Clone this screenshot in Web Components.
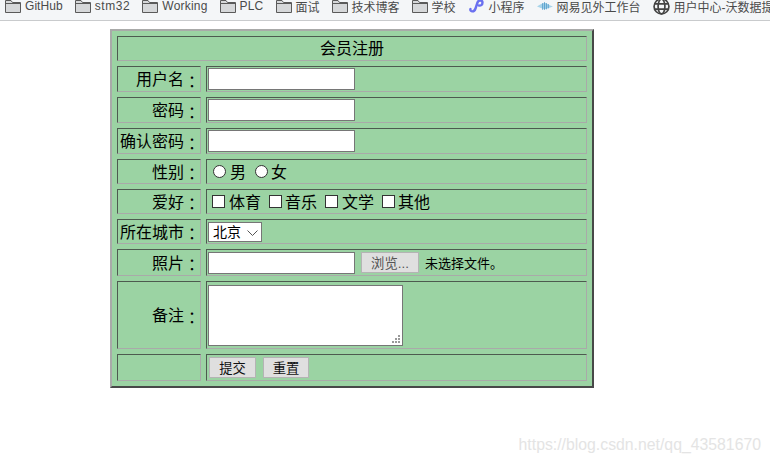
<!DOCTYPE html>
<html lang="zh">
<head>
<meta charset="utf-8">
<title>会员注册</title>
<style>
  html, body { margin: 0; padding: 0; background: #fff; }
  body { width: 770px; height: 463px; overflow: hidden; position: relative; font-family: "Liberation Sans", "Noto Sans CJK SC", sans-serif; }
</style>
</head>
<body>
<bookmark-bar>
  <bookmark-item style="letter-spacing:.05px">GitHub</bookmark-item>
  <bookmark-item style="letter-spacing:.6px">stm32</bookmark-item>
  <bookmark-item style="letter-spacing:.2px">Working</bookmark-item>
  <bookmark-item style="letter-spacing:.2px">PLC</bookmark-item>
  <bookmark-item>面试</bookmark-item>
  <bookmark-item>技术博客</bookmark-item>
  <bookmark-item>学校</bookmark-item>
  <bookmark-item icon="mini">小程序</bookmark-item>
  <bookmark-item icon="wave">网易见外工作台</bookmark-item>
  <bookmark-item icon="globe">用户中心-沃数据提</bookmark-item>
</bookmark-bar>

<register-form></register-form>

<water-mark>https://blog.csdn.net/qq_43581670</water-mark>

<script>
  const ICONS = {
    folder: `<svg width="16" height="14" viewBox="0 0 16 14"><path d="M.5 13.5V1.5h5.5l1.5 2h8v10z" fill="#d6d8da" stroke="#5a5a5a"/><path d="M.5 4.5h15" stroke="#5a5a5a"/></svg>`,
    mini: `<svg width="17" height="16" viewBox="0 0 17 16"><path d="M2.500 11c-1 2.500 3.500 4 5-.5l2-6c1-3 5-2.500 5 0 0 2.500-2 3.500-3.500 3" fill="none" stroke="#6a70f0" stroke-width="2.400" stroke-linecap="round"/></svg>`,
    wave: `<svg width="16" height="12" viewBox="0 0 17 12"><path d="M0 6.500c3-2 5-3 8-4 3 1 6 3 9 4-3 1-6 2-9 3-3-1-5-2-8-3z" fill="#a8d4ea"/><path d="M6 3v7M8 2v8M10 3v6.500M12 4v4.500" stroke="#5aa0cc"/></svg>`,
    globe: `<svg width="17" height="17" viewBox="0 0 16 16" fill="none" stroke="#444" stroke-width="1.600"><circle cx="8" cy="8" r="7"/><ellipse cx="8" cy="8" rx="3.200" ry="7"/><path d="M1 5.500h14M1 10.500h14"/></svg>`
  };

  class BookmarkBar extends HTMLElement {
    constructor() {
      super();
      this.attachShadow({ mode: 'open' }).innerHTML = `
        <style>
          :host {
            display: flex;
            box-sizing: border-box;
            height: 21px;
            padding-left: 5px;
            gap: 12px;
            overflow: hidden;
            white-space: nowrap;
            background: #f4f6f8;
            border-bottom: 1px solid #c9cbcd;
          }
        </style>
        <slot></slot>
      `;
    }
  }

  class BookmarkItem extends HTMLElement {
    constructor() {
      super();
      const name = this.getAttribute('icon');
      const icon = ICONS[name] || ICONS.folder;
      this.attachShadow({ mode: 'open' }).innerHTML = `
        <style>
          :host {
            display: flex;
            align-items: center;
            flex: none;
            gap: 4px;
            height: 12px;
            font: 12px "Liberation Sans", "Noto Sans CJK SC", sans-serif;
            color: #4a4a4a;
          }
          svg { display: block; flex: none; }
        </style>
        ${icon}<slot></slot>
      `;
    }
  }

  class RegCell extends HTMLElement {
    constructor() {
      super();
      this.attachShadow({ mode: 'open' }).innerHTML = `
        <style>
          :host {
            display: flex;
            align-items: center;
            box-sizing: border-box;
            min-width: 0;
            border: 1px solid;
            border-color: #4d5a4f #a9aaa9 #a9aaa9 #4d5a4f;
            padding: 0 1px;
            font: 16px "Liberation Sans", "Noto Sans CJK SC", sans-serif;
            color: #000;
            white-space: nowrap;
          }
          :host([label]) { justify-content: flex-end; padding: 0 0 2px 0; }
          :host([title-cell]) { grid-column: 1 / 3; justify-content: center; padding-bottom: 3px; }
        </style>
        <slot></slot>
      `;
    }
  }

  const CHEVRON = "url(\"data:image/svg+xml,%3Csvg xmlns='http://www.w3.org/2000/svg' width='11' height='6'%3E%3Cpath d='M.5.5l5 5 5-5' fill='none' stroke='%23555'/%3E%3C/svg%3E\")";

  class RegisterForm extends HTMLElement {
    constructor() {
      super();
      this.attachShadow({ mode: 'open' }).innerHTML = `
        <style>
          :host {
            display: block;
            box-sizing: border-box;
            width: 484px;
            margin: 8px 0 0 110px;
            border: 2px solid;
            border-color: #a9aaa9 #484848 #484848 #a9aaa9;
            background: #9bd3a3;
          }
          form {
            display: grid;
            grid-template-columns: 84px 381px;
            grid-template-rows: 25px 26px 26px 26px 25px 25px 25px 27px 68px 27px;
            gap: 5px;
            padding: 5px;
          }
          input, select, textarea, button { box-sizing: border-box; margin: 0; font-family: "Liberation Sans", "Noto Sans CJK SC", sans-serif; }
          .colon { font-family: "Noto Sans CJK TC", sans-serif; padding-top: 5px; }
          .dot { font-family: "Noto Sans CJK TC", sans-serif; }
          .txt {
            width: 147px;
            height: 22px;
            padding: 1px 2px;
            background: #fff;
            border: 1px solid #767676;
          }
          .opt {
            appearance: none;
            width: 13px;
            height: 13px;
            flex: none;
            background: #fff;
            border: 1px solid #333;
          }
          .opt[type=radio] { border-radius: 50%; }
          .opts { padding-bottom: 2px; }
          select {
            appearance: none;
            width: 54px;
            height: 20px;
            padding: 0 0 0 4px;
            font-size: 14px;
            background: #fff ${CHEVRON} no-repeat 38px 7px;
            border: 1px solid #767676;
            border-radius: 0;
          }
          .area { position: relative; display: block; width: 195px; height: 61px; }
          textarea { display: block; width: 195px; height: 61px; border: 1px solid #767676; background: #fff; resize: none; }
          .grip { position: absolute; right: 2px; bottom: 2px; }
          button {
            height: 21px;
            padding: 0;
            font-size: 13.333px;
            background: #dfdfdf;
            border: 1px solid #b4b4b4;
            color: #111;
          }
          .browse { width: 58px; margin-left: 6px; color: #555; }
          .note { margin-left: 6px; font-size: 13px; }
          .sub { width: 47px; margin-left: 1px; }
          .res { width: 46px; margin-left: 7px; }
        </style>
        <form>
          <reg-cell title-cell>会员注册</reg-cell>

          <reg-cell label>用户名<span class="colon">：</span></reg-cell>
          <reg-cell><input class="txt" type="text"></reg-cell>

          <reg-cell label>密码<span class="colon">：</span></reg-cell>
          <reg-cell><input class="txt" type="password"></reg-cell>

          <reg-cell label>确认密码<span class="colon">：</span></reg-cell>
          <reg-cell><input class="txt" type="password"></reg-cell>

          <reg-cell label>性别<span class="colon">：</span></reg-cell>
          <reg-cell>
            <input class="opt" style="margin:0 4px 0 5px" type="radio" name="sex"><span class="opts" style="margin-right:9px">男</span>
            <input class="opt" style="margin:0 3px 0 0" type="radio" name="sex"><span class="opts">女</span>
          </reg-cell>

          <reg-cell label>爱好<span class="colon">：</span></reg-cell>
          <reg-cell>
            <input class="opt" style="margin:0 4px 0 4px" type="checkbox"><span class="opts" style="margin-right:8px">体育</span>
            <input class="opt" style="margin:0 3px 0 0" type="checkbox"><span class="opts" style="margin-right:8px">音乐</span>
            <input class="opt" style="margin:0 4px 0 0" type="checkbox"><span class="opts" style="margin-right:8px">文学</span>
            <input class="opt" style="margin:0 3px 0 0" type="checkbox"><span class="opts">其他</span>
          </reg-cell>

          <reg-cell label>所在城市<span class="colon">：</span></reg-cell>
          <reg-cell><select><option>北京</option><option>上海</option></select></reg-cell>

          <reg-cell label>照片<span class="colon">：</span></reg-cell>
          <reg-cell>
            <input class="txt" type="text">
            <button class="browse" type="button">浏览...</button>
            <span class="note">未选择文件<span class="dot">。</span></span>
          </reg-cell>

          <reg-cell label>备注<span class="colon">：</span></reg-cell>
          <reg-cell>
            <span class="area">
              <textarea></textarea>
              <svg class="grip" width="9" height="9" viewBox="0 0 9 9" fill="#9a9a9a"><rect x="6" y="0" width="2" height="2"/><rect x="3" y="3" width="2" height="2"/><rect x="6" y="3" width="2" height="2"/><rect x="0" y="6" width="2" height="2"/><rect x="3" y="6" width="2" height="2"/><rect x="6" y="6" width="2" height="2"/></svg>
            </span>
          </reg-cell>

          <reg-cell></reg-cell>
          <reg-cell>
            <button class="sub" type="button">提交</button>
            <button class="res" type="button">重置</button>
          </reg-cell>
        </form>
      `;
    }
  }

  class WaterMark extends HTMLElement {
    constructor() {
      super();
      this.attachShadow({ mode: 'open' }).innerHTML = `
        <style>
          :host {
            position: absolute;
            right: 9px;
            top: 436px;
            font: 15.800px "Liberation Sans", sans-serif;
            color: #e4e4e4;
            white-space: nowrap;
          }
        </style>
        <slot></slot>
      `;
    }
  }

  customElements.define('bookmark-bar', BookmarkBar);
  customElements.define('bookmark-item', BookmarkItem);
  customElements.define('reg-cell', RegCell);
  customElements.define('register-form', RegisterForm);
  customElements.define('water-mark', WaterMark);
</script>
</body>
</html>
